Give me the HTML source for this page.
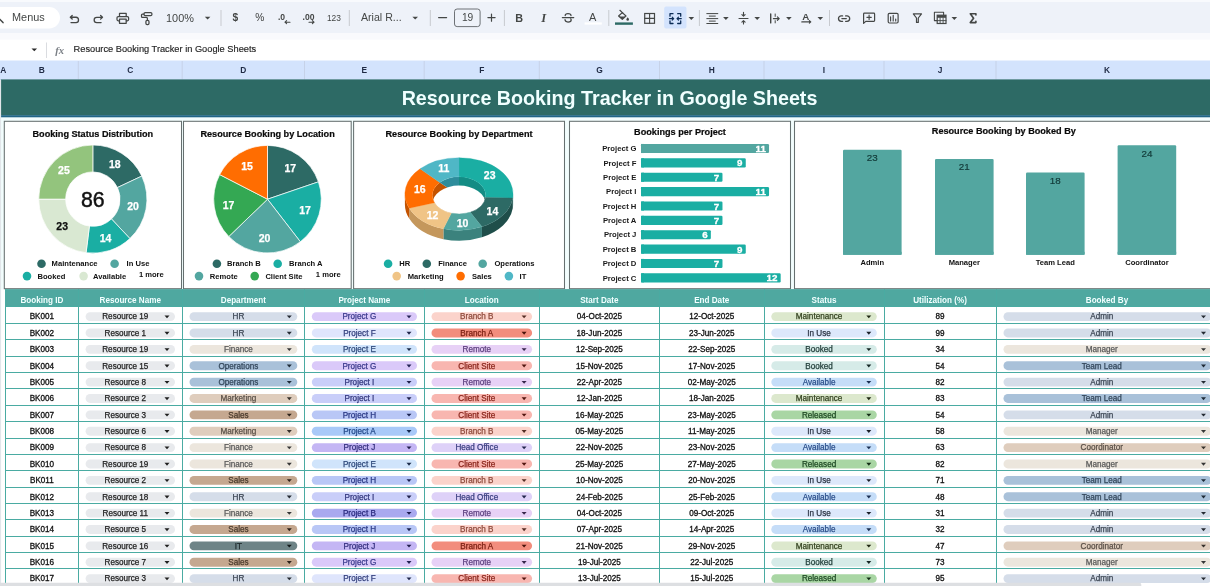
<!DOCTYPE html>
<html><head><meta charset="utf-8"><title>Resource Booking Tracker in Google Sheets</title>
<style>
html,body{margin:0;padding:0;background:#fff;}
body{width:1210px;height:586px;overflow:hidden;position:relative;font-family:"Liberation Sans",sans-serif;}
svg{position:absolute;left:0;top:0;display:block;will-change:transform;}
text{font-family:"Liberation Sans",sans-serif;white-space:pre;}
text.sf{font-family:"Liberation Serif",serif;}
</style></head><body>
<svg width="1210" height="586" viewBox="0 0 1210 586">
<rect x="0.00" y="0.00" width="1210.00" height="33.00" fill="#eef2f9"/>
<rect x="0.00" y="0.00" width="1210.00" height="2.00" fill="#f8fafd"/>
<rect x="-20.00" y="7.00" width="80.00" height="21.50" fill="#fff" rx="10.75"/>
<text x="12.00" y="20.70" font-size="10.9" fill="#444746">Menus</text>
<rect x="0.00" y="33.00" width="1210.00" height="27.50" fill="#fff"/>
<rect x="0.00" y="33.00" width="1210.00" height="6.60" fill="#f9fafd"/>
<path d="M-0.5,19 L3,22.6" fill="none" stroke="#444746" stroke-width="1.5" stroke-linecap="round" stroke-linejoin="round" />
<path d="M72.2,15.45 L70.3,17.25 L72.2,19.05 M70.5,17.25 H76 A2.68,2.68 0 0 1 76,22.6 H71" fill="none" stroke="#444746" stroke-width="1.3" stroke-linecap="round" stroke-linejoin="round" />
<path d="M100.6,15.5 L102.5,17.3 L100.6,19.1 M102.3,17.3 H96.8 A2.65,2.65 0 0 0 96.8,22.6 H101.1" fill="none" stroke="#444746" stroke-width="1.3" stroke-linecap="round" stroke-linejoin="round" />
<path d="M119.5,16.3 V13.4 H126.2 V16.3" fill="none" stroke="#444746" stroke-width="1.25" stroke-linecap="round" stroke-linejoin="round" />
<path d="M119.4,20.8 H118.2 Q117,20.8 117,19.6 V17.7 Q117,16.5 118.2,16.5 H127.4 Q128.6,16.5 128.6,17.7 V19.6 Q128.6,20.8 127.4,20.8 H126.3" fill="none" stroke="#444746" stroke-width="1.25" stroke-linecap="round" stroke-linejoin="round" />
<path d="M119.5,19.2 H126.2 V23.3 H119.5 Z" fill="none" stroke="#444746" stroke-width="1.25" stroke-linecap="round" stroke-linejoin="round" />
<rect x="144" y="12.5" width="7.9" height="3.1" rx="1.2" fill="none" stroke="#444746" stroke-width="1.25"/>
<path d="M144,14 H142.4 Q141.5,14 141.5,14.9 V16.5 Q141.5,17.4 142.4,17.4 H146.4 Q147.4,17.4 147.4,18.4 V20.4" fill="none" stroke="#444746" stroke-width="1.25" stroke-linecap="round" stroke-linejoin="round" />
<rect x="145.9" y="20.4" width="3.1" height="4.1" rx="1.3" fill="none" stroke="#444746" stroke-width="1.25"/>
<text x="180" y="21.9" font-size="10.9" font-weight="normal" text-anchor="middle" fill="#444746" >100%</text>
<path d="M204.79999999999998,16.8 L210.4,16.8 L207.6,19.6 Z" fill="#444746"/>
<rect x="220.5" y="10" width="1" height="16" fill="#c7cacf"/>
<text x="235.4" y="20.6" font-size="10.2" font-weight="bold" text-anchor="middle" fill="#444746" >$</text>
<text x="259.9" y="20.6" font-size="10.2" font-weight="normal" text-anchor="middle" fill="#3a3c3b" >%</text>
<text x="281.5" y="19.5" font-size="8.6" font-weight="bold" text-anchor="middle" fill="#444746" >.0</text>
<path d="M290,22.2 H285 M286.6,20.7 L285,22.2 L286.6,23.7" fill="none" stroke="#444746" stroke-width="1.1" stroke-linecap="round" stroke-linejoin="round" />
<text x="308.5" y="19.5" font-size="8.6" font-weight="bold" text-anchor="middle" fill="#444746" >.00</text>
<path d="M309,22.2 H314 M312.4,20.7 L314,22.2 L312.4,23.7" fill="none" stroke="#444746" stroke-width="1.1" stroke-linecap="round" stroke-linejoin="round" />
<text x="333.9" y="20.5" font-size="8.4" font-weight="normal" text-anchor="middle" fill="#444746" >123</text>
<rect x="348.8" y="10" width="1" height="16" fill="#c7cacf"/>
<text x="361" y="21.2" font-size="10.6" font-weight="normal" text-anchor="start" fill="#444746" >Arial R...</text>
<path d="M412.4,16.8 L418.0,16.8 L415.2,19.6 Z" fill="#444746"/>
<rect x="429.8" y="10" width="1" height="16" fill="#c7cacf"/>
<path d="M438.6,17.6 H446.6" fill="none" stroke="#444746" stroke-width="1.2" stroke-linecap="round" stroke-linejoin="round" />
<rect x="454.5" y="9" width="25.6" height="17.6" rx="2.6" fill="none" stroke="#5f6368" stroke-width="0.9"/>
<text x="467.6" y="21" font-size="10.2" font-weight="normal" text-anchor="middle" fill="#444746" >19</text>
<path d="M487.9,17.6 H495.1 M491.5,14 V21.2" fill="none" stroke="#444746" stroke-width="1.2" stroke-linecap="round" stroke-linejoin="round" />
<rect x="503.9" y="10" width="1" height="16" fill="#c7cacf"/>
<text x="519.2" y="21.9" font-size="10.8" font-weight="bold" text-anchor="middle" fill="#444746" >B</text>
<text x="543.6" y="22.2" font-size="12.6" font-style="italic" font-weight="bold" text-anchor="middle" fill="#444746" class="sf">I</text>
<path d="M562.3,17.6 H573.8" fill="none" stroke="#444746" stroke-width="1.1" stroke-linecap="round" stroke-linejoin="round" />
<path d="M571,15.6 Q571,13.6 568,13.6 Q565.2,13.6 565.2,15.6" fill="none" stroke="#444746" stroke-width="1.25" stroke-linecap="round" stroke-linejoin="round" />
<path d="M565,19.6 Q565,22 568,22 Q571.2,22 571.2,19.9 Q571.2,19.2 570.6,18.8" fill="none" stroke="#444746" stroke-width="1.25" stroke-linecap="round" stroke-linejoin="round" />
<text x="592.6" y="20.7" font-size="11" font-weight="normal" text-anchor="middle" fill="#444746" >A</text>
<rect x="584.6" y="22.4" width="17.2" height="2.2" fill="#ffffff"/>
<rect x="608.3" y="10" width="1" height="16" fill="#c7cacf"/>
<path d="M619.9,10.3 L622.9,13.1" fill="none" stroke="#444746" stroke-width="1.2" stroke-linecap="round" stroke-linejoin="round" />
<path d="M622.3,12.6 L626,16 L622.3,19.4 L618.6,16 Z" fill="none" stroke="#444746" stroke-width="1.2" stroke-linecap="round" stroke-linejoin="round" />
<path d="M619.2,16.4 H625.4 L622.3,19.3 Z" fill="#444746"/>
<path d="M627.7,17.2 Q629,18.8 629,19.4 A1.3,1.3 0 0 1 626.4,19.4 Q626.4,18.8 627.7,17.2 Z" fill="#444746"/>
<rect x="615" y="22.4" width="17.9" height="2.4" fill="#2d6a65"/>
<rect x="644.7" y="13.5" width="9.8" height="9.8" fill="none" stroke="#444746" stroke-width="1.2"/>
<path d="M649.6,13.5 V23.3 M644.7,18.4 H654.5" fill="none" stroke="#444746" stroke-width="1.1" stroke-linecap="round" stroke-linejoin="round" />
<rect x="664.2" y="6.4" width="22.3" height="22.2" rx="2" fill="#d3e3fd"/>
<path d="M673,13.7 H670 V16.2 M677.7,13.7 H680.7 V16.2 M670,21 V23.5 H673 M680.7,21 V23.5 H677.7" fill="none" stroke="#0b2b55" stroke-width="1.3" stroke-linecap="round" stroke-linejoin="round" />
<path d="M669.4,18.6 H673.6 M672.2,17.1 L673.7,18.6 L672.2,20.1 M681.3,18.6 H677.1 M678.5,17.1 L677,18.6 L678.5,20.1" fill="none" stroke="#0b2b55" stroke-width="1.15" stroke-linecap="round" stroke-linejoin="round" />
<path d="M688.5,17.099999999999998 L694.0999999999999,17.099999999999998 L691.3,19.9 Z" fill="#444746"/>
<rect x="698.9" y="10" width="1" height="16" fill="#c7cacf"/>
<path d="M706.8,13.6 H717.8 M709.3,16.1 H715.3 M706.8,18.6 H717.8 M709.3,21.1 H715.3 M706.8,23.5 H717.8" fill="none" stroke="#444746" stroke-width="1.0" stroke-linecap="round" stroke-linejoin="round" />
<path d="M723.1,17.099999999999998 L728.6999999999999,17.099999999999998 L725.9,19.9 Z" fill="#444746"/>
<path d="M739,18.5 H748" fill="none" stroke="#444746" stroke-width="1.1" stroke-linecap="round" stroke-linejoin="round" />
<path d="M743.5,12.3 V16 M741.9,14.6 L743.5,16.2 L745.1,14.6" fill="none" stroke="#444746" stroke-width="1.1" stroke-linecap="round" stroke-linejoin="round" />
<path d="M743.5,24 V20.8 M741.9,22.2 L743.5,20.6 L745.1,22.2" fill="none" stroke="#444746" stroke-width="1.1" stroke-linecap="round" stroke-linejoin="round" />
<path d="M754.4000000000001,17.099999999999998 L760.0,17.099999999999998 L757.2,19.9 Z" fill="#444746"/>
<path d="M770.7,14 V22.9" fill="none" stroke="#444746" stroke-width="1.4" stroke-linecap="round" stroke-linejoin="round" />
<path d="M775.2,14 V16.4 M775.2,20.7 V22.9" fill="none" stroke="#444746" stroke-width="1.0" stroke-linecap="round" stroke-linejoin="round" />
<path d="M773.4,18.6 H779 M777.4,16.8 L779.2,18.6 L777.4,20.4" fill="none" stroke="#444746" stroke-width="1.15" stroke-linecap="round" stroke-linejoin="round" />
<path d="M786.1,17.099999999999998 L791.6999999999999,17.099999999999998 L788.9,19.9 Z" fill="#444746"/>
<text x="805.9" y="20.1" font-size="9.8" font-weight="bold" text-anchor="middle" fill="#444746" >A</text>
<path d="M801.8,21.9 H810.6 M809.4,20.7 L810.8,21.9 L809.4,23.1" fill="none" stroke="#444746" stroke-width="1.15" stroke-linecap="round" stroke-linejoin="round" />
<path d="M817.5,17.099999999999998 L823.0999999999999,17.099999999999998 L820.3,19.9 Z" fill="#444746"/>
<rect x="829.0" y="10" width="1" height="16" fill="#c7cacf"/>
<path d="M842.6,15.9 H841.2 A2.7,2.7 0 0 0 841.2,21.3 H842.6 M845.6,15.9 H847 A2.7,2.7 0 0 1 847,21.3 H845.6 M841.9,18.6 H846.3" fill="none" stroke="#444746" stroke-width="1.3" stroke-linecap="round" stroke-linejoin="round" />
<path d="M863.6,23.4 V14 Q863.6,13.2 864.4,13.2 H873.8 Q874.6,13.2 874.6,14 V20.6 Q874.6,21.4 873.8,21.4 H865.8 Z" fill="none" stroke="#444746" stroke-width="1.2" stroke-linecap="round" stroke-linejoin="round" />
<path d="M866.9,17.3 H871.3 M869.1,15.1 V19.5" fill="none" stroke="#444746" stroke-width="1.15" stroke-linecap="round" stroke-linejoin="round" />
<rect x="888.2" y="13.4" width="9.9" height="9.6" rx="1.2" fill="none" stroke="#444746" stroke-width="1.2"/>
<path d="M890.6,16.9 V20.9 M893.2,15.3 V20.9 M895.7,19 V20.9" fill="none" stroke="#444746" stroke-width="1.15" stroke-linecap="round" stroke-linejoin="round" />
<path d="M913.3,13.9 H921.5 L918.3,18 V22.4 L916.5,22.4 V18 Z" fill="none" stroke="#444746" stroke-width="1.2" stroke-linecap="round" stroke-linejoin="round" />
<path d="M936.6,20.6 H934.4 V12.3 H943.6 V14.4" fill="none" stroke="#444746" stroke-width="1.1" stroke-linecap="round" stroke-linejoin="round" />
<rect x="937.2" y="15.2" width="8.8" height="8.3" fill="none" stroke="#444746" stroke-width="1.2"/>
<rect x="937.2" y="15.2" width="8.8" height="2.6" fill="#444746"/>
<path d="M937.2,20.6 H946 M940.1,17.8 V23.5 M943.1,17.8 V23.5" fill="none" stroke="#444746" stroke-width="0.9" stroke-linecap="round" stroke-linejoin="round" />
<path d="M951.5,17.099999999999998 L957.0999999999999,17.099999999999998 L954.3,19.9 Z" fill="#444746"/>
<path d="M975.9,15 V13.7 H970.3 L973.6,18.2 L970.3,22.6 H975.9 V21.3" fill="none" stroke="#444746" stroke-width="1.65" stroke-linecap="round" stroke-linejoin="round" />
<path d="M31.499999999999996,48.5 L37.099999999999994,48.5 L34.3,51.3 Z" fill="#2a2a2a"/>
<text x="55.3" y="53.7" font-size="10.6" font-style="italic" font-weight="bold" fill="#7a7f85" class="sf">fx</text>
<rect x="46.00" y="42.50" width="1.00" height="15.50" fill="#dadce0"/>
<text x="73.60" y="52.30" font-size="9.25" fill="#1f1f1f" stroke="#1f1f1f" stroke-width="0.15">Resource Booking Tracker in Google Sheets</text>
<rect x="0.00" y="60.50" width="1210.00" height="19.50" fill="#d3e3fd"/>
<text x="3.20" y="72.89" font-size="8.4" font-weight="bold" text-anchor="middle" fill="#1f2a44">A</text>
<text x="41.90" y="72.89" font-size="8.4" font-weight="bold" text-anchor="middle" fill="#1f2a44">B</text>
<text x="130.25" y="72.89" font-size="8.4" font-weight="bold" text-anchor="middle" fill="#1f2a44">C</text>
<rect x="77.80" y="61.00" width="1.00" height="18.40" fill="#c6d2e8"/>
<text x="243.35" y="72.89" font-size="8.4" font-weight="bold" text-anchor="middle" fill="#1f2a44">D</text>
<rect x="181.70" y="61.00" width="1.00" height="18.40" fill="#c6d2e8"/>
<text x="364.35" y="72.89" font-size="8.4" font-weight="bold" text-anchor="middle" fill="#1f2a44">E</text>
<rect x="304.00" y="61.00" width="1.00" height="18.40" fill="#c6d2e8"/>
<text x="481.75" y="72.89" font-size="8.4" font-weight="bold" text-anchor="middle" fill="#1f2a44">F</text>
<rect x="423.70" y="61.00" width="1.00" height="18.40" fill="#c6d2e8"/>
<text x="599.40" y="72.89" font-size="8.4" font-weight="bold" text-anchor="middle" fill="#1f2a44">G</text>
<rect x="538.80" y="61.00" width="1.00" height="18.40" fill="#c6d2e8"/>
<text x="711.75" y="72.89" font-size="8.4" font-weight="bold" text-anchor="middle" fill="#1f2a44">H</text>
<rect x="659.00" y="61.00" width="1.00" height="18.40" fill="#c6d2e8"/>
<text x="824.00" y="72.89" font-size="8.4" font-weight="bold" text-anchor="middle" fill="#1f2a44">I</text>
<rect x="763.50" y="61.00" width="1.00" height="18.40" fill="#c6d2e8"/>
<text x="940.00" y="72.89" font-size="8.4" font-weight="bold" text-anchor="middle" fill="#1f2a44">J</text>
<rect x="883.50" y="61.00" width="1.00" height="18.40" fill="#c6d2e8"/>
<text x="1107.00" y="72.89" font-size="8.4" font-weight="bold" text-anchor="middle" fill="#1f2a44">K</text>
<rect x="995.50" y="61.00" width="1.00" height="18.40" fill="#c6d2e8"/>
<rect x="0.80" y="79.40" width="1210.00" height="36.00" fill="#2d6a65"/>
<rect x="0.80" y="115.20" width="1210.00" height="2.40" fill="#1f6587"/>
<text x="609.50" y="104.68" font-size="19.7" font-weight="bold" text-anchor="middle" fill="#f0ffff">Resource Booking Tracker in Google Sheets</text>
<rect x="0.00" y="117.50" width="1210.00" height="172.00" fill="#f2fdfd"/>
<rect x="4.30" y="121.3" width="177.20" height="167.4" fill="#fff" stroke="#667070" stroke-width="1.05"/>
<rect x="183.50" y="121.3" width="167.70" height="167.4" fill="#fff" stroke="#667070" stroke-width="1.05"/>
<rect x="353.60" y="121.3" width="210.90" height="167.4" fill="#fff" stroke="#667070" stroke-width="1.05"/>
<rect x="569.50" y="121.3" width="221.00" height="167.4" fill="#fff" stroke="#667070" stroke-width="1.05"/>
<rect x="794.50" y="121.3" width="420.50" height="167.4" fill="#fff" stroke="#667070" stroke-width="1.05"/>
<path d="M92.85,145.00 A54.1,54.1 0 0 1 141.80,176.07 L117.46,187.52 A27.2,27.2 0 0 0 92.85,171.90 Z" fill="#2d6a65" stroke="#fff" stroke-width="0.7" stroke-linejoin="round"/>
<path d="M141.80,176.07 A54.1,54.1 0 0 1 129.88,238.54 L111.47,218.93 A27.2,27.2 0 0 0 117.46,187.52 Z" fill="#53a6a0" stroke="#fff" stroke-width="0.7" stroke-linejoin="round"/>
<path d="M129.88,238.54 A54.1,54.1 0 0 1 86.07,252.77 L89.44,226.09 A27.2,27.2 0 0 0 111.47,218.93 Z" fill="#1aaea3" stroke="#fff" stroke-width="0.7" stroke-linejoin="round"/>
<path d="M86.07,252.77 A54.1,54.1 0 0 1 38.75,199.10 L65.65,199.10 A27.2,27.2 0 0 0 89.44,226.09 Z" fill="#d9e8d2" stroke="#fff" stroke-width="0.7" stroke-linejoin="round"/>
<path d="M38.75,199.10 A54.1,54.1 0 0 1 92.85,145.00 L92.85,171.90 A27.2,27.2 0 0 0 65.65,199.10 Z" fill="#93c47d" stroke="#fff" stroke-width="0.7" stroke-linejoin="round"/>
<text x="114.77" y="168.18" font-size="10.5" font-weight="bold" text-anchor="middle" fill="#fff" stroke="#fff" stroke-width="0.25">18</text>
<text x="133.03" y="210.38" font-size="10.5" font-weight="bold" text-anchor="middle" fill="#fff" stroke="#fff" stroke-width="0.25">20</text>
<text x="105.49" y="241.61" font-size="10.5" font-weight="bold" text-anchor="middle" fill="#fff" stroke="#fff" stroke-width="0.25">14</text>
<text x="62.17" y="229.76" font-size="10.5" font-weight="bold" text-anchor="middle" fill="#111" stroke="#111" stroke-width="0.25">23</text>
<text x="63.93" y="173.79" font-size="10.5" font-weight="bold" text-anchor="middle" fill="#fff" stroke="#fff" stroke-width="0.25">25</text>
<text x="92.85" y="206.73" font-size="21.3" text-anchor="middle" fill="#111" stroke="#111" stroke-width="0.45">86</text>
<path d="M267.5,199.2 L267.50,145.40 A53.8,53.8 0 0 1 318.42,181.83 Z" fill="#2d6a65" stroke="#fff" stroke-width="0.7" stroke-linejoin="round"/>
<path d="M267.5,199.2 L318.42,181.83 A53.8,53.8 0 0 1 300.38,241.78 Z" fill="#1aaea3" stroke="#fff" stroke-width="0.7" stroke-linejoin="round"/>
<path d="M267.5,199.2 L300.38,241.78 A53.8,53.8 0 0 1 228.77,236.54 Z" fill="#53a6a0" stroke="#fff" stroke-width="0.7" stroke-linejoin="round"/>
<path d="M267.5,199.2 L228.77,236.54 A53.8,53.8 0 0 1 219.65,174.60 Z" fill="#34a853" stroke="#fff" stroke-width="0.7" stroke-linejoin="round"/>
<path d="M267.5,199.2 L219.65,174.60 A53.8,53.8 0 0 1 267.50,145.40 Z" fill="#ff6d01" stroke="#fff" stroke-width="0.7" stroke-linejoin="round"/>
<text x="290.35" y="171.51" font-size="10.5" font-weight="bold" text-anchor="middle" fill="#fff" stroke="#fff" stroke-width="0.25">17</text>
<text x="305.11" y="214.17" font-size="10.5" font-weight="bold" text-anchor="middle" fill="#fff" stroke="#fff" stroke-width="0.25">17</text>
<text x="264.63" y="241.64" font-size="10.5" font-weight="bold" text-anchor="middle" fill="#fff" stroke="#fff" stroke-width="0.25">20</text>
<text x="228.64" y="208.65" font-size="10.5" font-weight="bold" text-anchor="middle" fill="#fff" stroke="#fff" stroke-width="0.25">17</text>
<text x="247.04" y="169.95" font-size="10.5" font-weight="bold" text-anchor="middle" fill="#fff" stroke="#fff" stroke-width="0.25">15</text>
<path d="M513.10,194.00 A54.1,36.3 0 0 1 512.78,197.97 L512.78,208.37 A54.1,36.3 0 0 0 513.10,204.40 Z" fill="#148c84"/>
<path d="M512.78,197.97 A54.1,36.3 0 0 1 481.96,226.87 L481.96,237.27 A54.1,36.3 0 0 0 512.78,208.37 Z" fill="#1f4e4a"/>
<path d="M481.96,226.87 A54.1,36.3 0 0 1 443.41,228.76 L443.41,239.16 A54.1,36.3 0 0 0 481.96,237.27 Z" fill="#3b827d"/>
<path d="M443.41,228.76 A54.1,36.3 0 0 1 409.21,208.20 L409.21,218.60 A54.1,36.3 0 0 0 443.41,239.16 Z" fill="#c4975c"/>
<path d="M409.21,208.20 A54.1,36.3 0 0 1 404.90,194.00 L404.90,204.40 A54.1,36.3 0 0 0 409.21,218.60 Z" fill="#c45300"/>
<clipPath id="inh"><ellipse cx="459.0" cy="195.4" rx="26.7" ry="18.6"/></clipPath><g clip-path="url(#inh)">
<path d="M459.0,195.4 L459.00,139.60 A80.1,55.800000000000004 0 0 1 538.62,201.50 Z" fill="#148c84"/>
<path d="M459.0,195.4 L538.62,201.50 A80.1,55.800000000000004 0 0 1 493.00,245.92 Z" fill="#1f4e4a"/>
<path d="M459.0,195.4 L493.00,245.92 A80.1,55.800000000000004 0 0 1 435.92,248.83 Z" fill="#3b827d"/>
<path d="M459.0,195.4 L435.92,248.83 A80.1,55.800000000000004 0 0 1 385.28,217.22 Z" fill="#c4975c"/>
<path d="M459.0,195.4 L385.28,217.22 A80.1,55.800000000000004 0 0 1 401.34,156.67 Z" fill="#c45300"/>
<path d="M459.0,195.4 L401.34,156.67 A80.1,55.800000000000004 0 0 1 459.00,139.60 Z" fill="#2e8c9b"/>
<ellipse cx="459.0" cy="204.20000000000002" rx="26.7" ry="18.6" fill="#fff"/></g>
<path d="M459.00,157.70 A54.1,36.3 0 0 1 512.78,197.97 L485.54,197.43 A26.7,18.6 0 0 0 459.00,176.80 Z" fill="#1aaea3" stroke="#1aaea3" stroke-width="0.3"/>
<path d="M512.78,197.97 A54.1,36.3 0 0 1 481.96,226.87 L470.33,212.24 A26.7,18.6 0 0 0 485.54,197.43 Z" fill="#2d6a65" stroke="#2d6a65" stroke-width="0.3"/>
<path d="M481.96,226.87 A54.1,36.3 0 0 1 443.41,228.76 L451.31,213.21 A26.7,18.6 0 0 0 470.33,212.24 Z" fill="#53a6a0" stroke="#53a6a0" stroke-width="0.3"/>
<path d="M443.41,228.76 A54.1,36.3 0 0 1 409.21,208.20 L434.43,202.67 A26.7,18.6 0 0 0 451.31,213.21 Z" fill="#f0c486" stroke="#f0c486" stroke-width="0.3"/>
<path d="M409.21,208.20 A54.1,36.3 0 0 1 420.05,168.81 L439.78,182.49 A26.7,18.6 0 0 0 434.43,202.67 Z" fill="#ff6d01" stroke="#ff6d01" stroke-width="0.3"/>
<path d="M420.05,168.81 A54.1,36.3 0 0 1 459.00,157.70 L459.00,176.80 A26.7,18.6 0 0 0 439.78,182.49 Z" fill="#4fb7c6" stroke="#4fb7c6" stroke-width="0.3"/>
<text x="489.69" y="179.06" font-size="10.5" font-weight="bold" text-anchor="middle" fill="#fff" stroke="#fff" stroke-width="0.25">23</text>
<text x="492.46" y="214.72" font-size="10.5" font-weight="bold" text-anchor="middle" fill="#fff" stroke="#fff" stroke-width="0.25">14</text>
<text x="462.55" y="226.59" font-size="10.5" font-weight="bold" text-anchor="middle" fill="#fff" stroke="#fff" stroke-width="0.25">10</text>
<text x="432.64" y="219.38" font-size="10.5" font-weight="bold" text-anchor="middle" fill="#fff" stroke="#fff" stroke-width="0.25">12</text>
<text x="419.87" y="192.93" font-size="10.5" font-weight="bold" text-anchor="middle" fill="#fff" stroke="#fff" stroke-width="0.25">16</text>
<text x="443.80" y="171.84" font-size="10.5" font-weight="bold" text-anchor="middle" fill="#fff" stroke="#fff" stroke-width="0.25">11</text>
<circle cx="41.5" cy="263.8" r="4.3" fill="#2d6a65"/>
<text x="51.60" y="266.31" font-size="7.6" font-weight="bold" fill="#111">Maintenance</text>
<circle cx="114.6" cy="263.8" r="4.3" fill="#53a6a0"/>
<text x="126.60" y="266.31" font-size="7.6" font-weight="bold" fill="#111">In Use</text>
<circle cx="27" cy="276.1" r="4.3" fill="#1aaea3"/>
<text x="37.50" y="278.61" font-size="7.6" font-weight="bold" fill="#111">Booked</text>
<circle cx="83.6" cy="276.1" r="4.3" fill="#d9e8d2"/>
<text x="93.10" y="278.61" font-size="7.6" font-weight="bold" fill="#111">Available</text>
<text x="138.90" y="277.21" font-size="7.6" font-weight="bold" fill="#111">1 more</text>
<circle cx="216.9" cy="263.8" r="4.3" fill="#2d6a65"/>
<text x="227.00" y="266.31" font-size="7.6" font-weight="bold" fill="#111">Branch B</text>
<circle cx="277.7" cy="263.8" r="4.3" fill="#1aaea3"/>
<text x="289.10" y="266.31" font-size="7.6" font-weight="bold" fill="#111">Branch A</text>
<circle cx="199" cy="276.1" r="4.3" fill="#53a6a0"/>
<text x="209.80" y="278.61" font-size="7.6" font-weight="bold" fill="#111">Remote</text>
<circle cx="254.7" cy="276.1" r="4.3" fill="#34a853"/>
<text x="265.40" y="278.61" font-size="7.6" font-weight="bold" fill="#111">Client Site</text>
<text x="315.80" y="277.21" font-size="7.6" font-weight="bold" fill="#111">1 more</text>
<circle cx="388.1" cy="263.8" r="4.3" fill="#1aaea3"/>
<text x="399.20" y="266.31" font-size="7.6" font-weight="bold" fill="#111">HR</text>
<circle cx="426.8" cy="263.8" r="4.3" fill="#2d6a65"/>
<text x="438.20" y="266.31" font-size="7.6" font-weight="bold" fill="#111">Finance</text>
<circle cx="482.7" cy="263.8" r="4.3" fill="#53a6a0"/>
<text x="494.40" y="266.31" font-size="7.6" font-weight="bold" fill="#111">Operations</text>
<circle cx="396.7" cy="276.1" r="4.3" fill="#f0c486"/>
<text x="407.80" y="278.61" font-size="7.6" font-weight="bold" fill="#111">Marketing</text>
<circle cx="460.6" cy="276.1" r="4.3" fill="#ff6d01"/>
<text x="472.00" y="278.61" font-size="7.6" font-weight="bold" fill="#111">Sales</text>
<circle cx="508.9" cy="276.1" r="4.3" fill="#4fb7c6"/>
<text x="519.60" y="278.61" font-size="7.6" font-weight="bold" fill="#111">IT</text>
<text x="92.80" y="136.85" font-size="9.15" font-weight="bold" text-anchor="middle" fill="#0a0a0a" stroke="#0a0a0a" stroke-width="0.2">Booking Status Distribution</text>
<text x="267.60" y="136.85" font-size="9.15" font-weight="bold" text-anchor="middle" fill="#0a0a0a" stroke="#0a0a0a" stroke-width="0.2">Resource Booking by Location</text>
<text x="459.00" y="136.85" font-size="9.15" font-weight="bold" text-anchor="middle" fill="#0a0a0a" stroke="#0a0a0a" stroke-width="0.2">Resource Booking by Department</text>
<text x="680.00" y="135.35" font-size="9.15" font-weight="bold" text-anchor="middle" fill="#0a0a0a" stroke="#0a0a0a" stroke-width="0.2">Bookings per Project</text>
<text x="1003.80" y="134.35" font-size="9.15" font-weight="bold" text-anchor="middle" fill="#0a0a0a" stroke="#0a0a0a" stroke-width="0.2">Resource Booking by Booked By</text>
<rect x="641.00" y="143.95" width="128.04" height="9.10" fill="#53a6a0" rx="1.2"/>
<rect x="641.00" y="143.95" width="3.00" height="9.10" fill="#53a6a0"/>
<text x="636.40" y="151.25" font-size="7.7" font-weight="bold" text-anchor="end" fill="#1a1a1a">Project G</text>
<text x="765.84" y="152.07" font-size="9.8" font-weight="bold" text-anchor="end" fill="#fff" stroke="#fff" stroke-width="0.3">11</text>
<rect x="641.00" y="158.32" width="104.76" height="9.10" fill="#1aaea3" rx="1.2"/>
<rect x="641.00" y="158.32" width="3.00" height="9.10" fill="#1aaea3"/>
<text x="636.40" y="165.62" font-size="7.7" font-weight="bold" text-anchor="end" fill="#1a1a1a">Project F</text>
<text x="742.56" y="166.44" font-size="9.8" font-weight="bold" text-anchor="end" fill="#fff" stroke="#fff" stroke-width="0.3">9</text>
<rect x="641.00" y="172.69" width="81.48" height="9.10" fill="#1aaea3" rx="1.2"/>
<rect x="641.00" y="172.69" width="3.00" height="9.10" fill="#1aaea3"/>
<text x="636.40" y="179.99" font-size="7.7" font-weight="bold" text-anchor="end" fill="#1a1a1a">Project E</text>
<text x="719.28" y="180.81" font-size="9.8" font-weight="bold" text-anchor="end" fill="#fff" stroke="#fff" stroke-width="0.3">7</text>
<rect x="641.00" y="187.06" width="128.04" height="9.10" fill="#1aaea3" rx="1.2"/>
<rect x="641.00" y="187.06" width="3.00" height="9.10" fill="#1aaea3"/>
<text x="636.40" y="194.36" font-size="7.7" font-weight="bold" text-anchor="end" fill="#1a1a1a">Project I</text>
<text x="765.84" y="195.18" font-size="9.8" font-weight="bold" text-anchor="end" fill="#fff" stroke="#fff" stroke-width="0.3">11</text>
<rect x="641.00" y="201.43" width="81.48" height="9.10" fill="#1aaea3" rx="1.2"/>
<rect x="641.00" y="201.43" width="3.00" height="9.10" fill="#1aaea3"/>
<text x="636.40" y="208.73" font-size="7.7" font-weight="bold" text-anchor="end" fill="#1a1a1a">Project H</text>
<text x="719.28" y="209.55" font-size="9.8" font-weight="bold" text-anchor="end" fill="#fff" stroke="#fff" stroke-width="0.3">7</text>
<rect x="641.00" y="215.80" width="81.48" height="9.10" fill="#1aaea3" rx="1.2"/>
<rect x="641.00" y="215.80" width="3.00" height="9.10" fill="#1aaea3"/>
<text x="636.40" y="223.10" font-size="7.7" font-weight="bold" text-anchor="end" fill="#1a1a1a">Project A</text>
<text x="719.28" y="223.92" font-size="9.8" font-weight="bold" text-anchor="end" fill="#fff" stroke="#fff" stroke-width="0.3">7</text>
<rect x="641.00" y="230.17" width="69.84" height="9.10" fill="#1aaea3" rx="1.2"/>
<rect x="641.00" y="230.17" width="3.00" height="9.10" fill="#1aaea3"/>
<text x="636.40" y="237.47" font-size="7.7" font-weight="bold" text-anchor="end" fill="#1a1a1a">Project J</text>
<text x="707.64" y="238.29" font-size="9.8" font-weight="bold" text-anchor="end" fill="#fff" stroke="#fff" stroke-width="0.3">6</text>
<rect x="641.00" y="244.54" width="104.76" height="9.10" fill="#1aaea3" rx="1.2"/>
<rect x="641.00" y="244.54" width="3.00" height="9.10" fill="#1aaea3"/>
<text x="636.40" y="251.84" font-size="7.7" font-weight="bold" text-anchor="end" fill="#1a1a1a">Project B</text>
<text x="742.56" y="252.66" font-size="9.8" font-weight="bold" text-anchor="end" fill="#fff" stroke="#fff" stroke-width="0.3">9</text>
<rect x="641.00" y="258.91" width="81.48" height="9.10" fill="#1aaea3" rx="1.2"/>
<rect x="641.00" y="258.91" width="3.00" height="9.10" fill="#1aaea3"/>
<text x="636.40" y="266.21" font-size="7.7" font-weight="bold" text-anchor="end" fill="#1a1a1a">Project D</text>
<text x="719.28" y="267.03" font-size="9.8" font-weight="bold" text-anchor="end" fill="#fff" stroke="#fff" stroke-width="0.3">7</text>
<rect x="641.00" y="273.28" width="139.68" height="9.10" fill="#1aaea3" rx="1.2"/>
<rect x="641.00" y="273.28" width="3.00" height="9.10" fill="#1aaea3"/>
<text x="636.40" y="280.58" font-size="7.7" font-weight="bold" text-anchor="end" fill="#1a1a1a">Project C</text>
<text x="777.48" y="281.40" font-size="9.8" font-weight="bold" text-anchor="end" fill="#fff" stroke="#fff" stroke-width="0.3">12</text>
<rect x="843.00" y="149.76" width="58.60" height="105.04" fill="#53a6a0" rx="1.2"/>
<rect x="843.00" y="251.80" width="58.60" height="3.00" fill="#53a6a0"/>
<text x="872.30" y="161.23" font-size="9.8" text-anchor="middle" fill="#123a38" stroke="#123a38" stroke-width="0.2">23</text>
<text x="872.30" y="264.81" font-size="7.6" font-weight="bold" text-anchor="middle" fill="#111">Admin</text>
<rect x="935.00" y="158.89" width="58.60" height="95.91" fill="#53a6a0" rx="1.2"/>
<rect x="935.00" y="251.80" width="58.60" height="3.00" fill="#53a6a0"/>
<text x="964.30" y="170.36" font-size="9.8" text-anchor="middle" fill="#123a38" stroke="#123a38" stroke-width="0.2">21</text>
<text x="964.30" y="264.81" font-size="7.6" font-weight="bold" text-anchor="middle" fill="#111">Manager</text>
<rect x="1026.00" y="172.59" width="58.60" height="82.21" fill="#53a6a0" rx="1.2"/>
<rect x="1026.00" y="251.80" width="58.60" height="3.00" fill="#53a6a0"/>
<text x="1055.30" y="184.07" font-size="9.8" text-anchor="middle" fill="#123a38" stroke="#123a38" stroke-width="0.2">18</text>
<text x="1055.30" y="264.81" font-size="7.6" font-weight="bold" text-anchor="middle" fill="#111">Team Lead</text>
<rect x="1117.60" y="145.19" width="58.60" height="109.61" fill="#53a6a0" rx="1.2"/>
<rect x="1117.60" y="251.80" width="58.60" height="3.00" fill="#53a6a0"/>
<text x="1146.90" y="156.66" font-size="9.8" text-anchor="middle" fill="#123a38" stroke="#123a38" stroke-width="0.2">24</text>
<text x="1146.90" y="264.81" font-size="7.6" font-weight="bold" text-anchor="middle" fill="#111">Coordinator</text>
<rect x="5.00" y="289.10" width="1210.00" height="17.90" fill="#4fa8a0"/>
<text x="41.90" y="303.20" font-size="8.15" font-weight="bold" text-anchor="middle" fill="#f2ffff">Booking ID</text>
<text x="130.25" y="303.20" font-size="8.15" font-weight="bold" text-anchor="middle" fill="#f2ffff">Resource Name</text>
<text x="243.35" y="303.20" font-size="8.15" font-weight="bold" text-anchor="middle" fill="#f2ffff">Department</text>
<text x="364.35" y="303.20" font-size="8.15" font-weight="bold" text-anchor="middle" fill="#f2ffff">Project Name</text>
<text x="481.75" y="303.20" font-size="8.15" font-weight="bold" text-anchor="middle" fill="#f2ffff">Location</text>
<text x="599.40" y="303.20" font-size="8.15" font-weight="bold" text-anchor="middle" fill="#f2ffff">Start Date</text>
<text x="711.75" y="303.20" font-size="8.15" font-weight="bold" text-anchor="middle" fill="#f2ffff">End Date</text>
<text x="824.00" y="303.20" font-size="8.15" font-weight="bold" text-anchor="middle" fill="#f2ffff">Status</text>
<text x="940.00" y="303.20" font-size="8.15" font-weight="bold" text-anchor="middle" fill="#f2ffff">Utilization (%)</text>
<text x="1107.00" y="303.20" font-size="8.15" font-weight="bold" text-anchor="middle" fill="#f2ffff">Booked By</text>
<text x="41.90" y="319.40" font-size="8.15" text-anchor="middle" fill="#111" stroke="#111" stroke-width="0.3">BK001</text>
<rect x="85.60" y="312.20" width="89.40" height="8.80" fill="#e8eaed" rx="4.4"/>
<text x="125.30" y="319.40" font-size="8.15" text-anchor="middle" fill="#1f1f1f" stroke="#1f1f1f" stroke-width="0.25">Resource 19</text>
<path d="M164.50,315.40 h5 l-2.5,2.9 Z" fill="#1f1f1f"/>
<rect x="189.50" y="312.20" width="107.80" height="8.80" fill="#d5dde9" rx="4.4"/>
<text x="238.40" y="319.40" font-size="8.15" text-anchor="middle" fill="#3c4654" stroke="#3c4654" stroke-width="0.25">HR</text>
<path d="M286.80,315.40 h5 l-2.5,2.9 Z" fill="#242a32"/>
<rect x="311.80" y="312.20" width="105.20" height="8.80" fill="#dac9f9" rx="4.4"/>
<text x="359.40" y="319.40" font-size="8.15" text-anchor="middle" fill="#3a3a8c" stroke="#3a3a8c" stroke-width="0.25">Project G</text>
<path d="M406.50,315.40 h5 l-2.5,2.9 Z" fill="#222254"/>
<rect x="431.50" y="312.20" width="100.60" height="8.80" fill="#fbd3cb" rx="4.4"/>
<text x="476.80" y="319.40" font-size="8.15" text-anchor="middle" fill="#8f4a3c" stroke="#8f4a3c" stroke-width="0.25">Branch B</text>
<path d="M521.60,315.40 h5 l-2.5,2.9 Z" fill="#552c24"/>
<text x="599.40" y="319.40" font-size="8.15" text-anchor="middle" fill="#111" stroke="#111" stroke-width="0.3">04-Oct-2025</text>
<text x="711.75" y="319.40" font-size="8.15" text-anchor="middle" fill="#111" stroke="#111" stroke-width="0.3">12-Oct-2025</text>
<rect x="771.30" y="312.20" width="105.50" height="8.80" fill="#dce8cd" rx="4.4"/>
<text x="819.05" y="319.40" font-size="8.15" text-anchor="middle" fill="#33421f" stroke="#33421f" stroke-width="0.25">Maintenance</text>
<path d="M866.30,315.40 h5 l-2.5,2.9 Z" fill="#1e2712"/>
<text x="940.00" y="319.40" font-size="8.15" text-anchor="middle" fill="#111" stroke="#111" stroke-width="0.3">89</text>
<rect x="1003.50" y="312.20" width="208.00" height="8.80" fill="#d5dde9" rx="4.4"/>
<text x="1101.80" y="319.40" font-size="8.15" text-anchor="middle" fill="#3c4654" stroke="#3c4654" stroke-width="0.25">Admin</text>
<path d="M1201.00,315.40 h5 l-2.5,2.9 Z" fill="#242a32"/>
<text x="41.90" y="335.77" font-size="8.15" text-anchor="middle" fill="#111" stroke="#111" stroke-width="0.3">BK002</text>
<rect x="85.60" y="328.58" width="89.40" height="8.80" fill="#e8eaed" rx="4.4"/>
<text x="125.30" y="335.77" font-size="8.15" text-anchor="middle" fill="#1f1f1f" stroke="#1f1f1f" stroke-width="0.25">Resource 1</text>
<path d="M164.50,331.78 h5 l-2.5,2.9 Z" fill="#1f1f1f"/>
<rect x="189.50" y="328.58" width="107.80" height="8.80" fill="#d5dde9" rx="4.4"/>
<text x="238.40" y="335.77" font-size="8.15" text-anchor="middle" fill="#3c4654" stroke="#3c4654" stroke-width="0.25">HR</text>
<path d="M286.80,331.78 h5 l-2.5,2.9 Z" fill="#242a32"/>
<rect x="311.80" y="328.58" width="105.20" height="8.80" fill="#dfe5fc" rx="4.4"/>
<text x="359.40" y="335.77" font-size="8.15" text-anchor="middle" fill="#34407e" stroke="#34407e" stroke-width="0.25">Project F</text>
<path d="M406.50,331.78 h5 l-2.5,2.9 Z" fill="#1f264b"/>
<rect x="431.50" y="328.58" width="100.60" height="8.80" fill="#f28d7d" rx="4.4"/>
<text x="476.80" y="335.77" font-size="8.15" text-anchor="middle" fill="#7a1f12" stroke="#7a1f12" stroke-width="0.25">Branch A</text>
<path d="M521.60,331.78 h5 l-2.5,2.9 Z" fill="#49120a"/>
<text x="599.40" y="335.77" font-size="8.15" text-anchor="middle" fill="#111" stroke="#111" stroke-width="0.3">18-Jun-2025</text>
<text x="711.75" y="335.77" font-size="8.15" text-anchor="middle" fill="#111" stroke="#111" stroke-width="0.3">23-Jun-2025</text>
<rect x="771.30" y="328.58" width="105.50" height="8.80" fill="#dde8fb" rx="4.4"/>
<text x="819.05" y="335.77" font-size="8.15" text-anchor="middle" fill="#2c3444" stroke="#2c3444" stroke-width="0.25">In Use</text>
<path d="M866.30,331.78 h5 l-2.5,2.9 Z" fill="#1a1f28"/>
<text x="940.00" y="335.77" font-size="8.15" text-anchor="middle" fill="#111" stroke="#111" stroke-width="0.3">99</text>
<rect x="1003.50" y="328.58" width="208.00" height="8.80" fill="#d5dde9" rx="4.4"/>
<text x="1101.80" y="335.77" font-size="8.15" text-anchor="middle" fill="#3c4654" stroke="#3c4654" stroke-width="0.25">Admin</text>
<path d="M1201.00,331.78 h5 l-2.5,2.9 Z" fill="#242a32"/>
<text x="41.90" y="352.15" font-size="8.15" text-anchor="middle" fill="#111" stroke="#111" stroke-width="0.3">BK003</text>
<rect x="85.60" y="344.95" width="89.40" height="8.80" fill="#e8eaed" rx="4.4"/>
<text x="125.30" y="352.15" font-size="8.15" text-anchor="middle" fill="#1f1f1f" stroke="#1f1f1f" stroke-width="0.25">Resource 19</text>
<path d="M164.50,348.15 h5 l-2.5,2.9 Z" fill="#1f1f1f"/>
<rect x="189.50" y="344.95" width="107.80" height="8.80" fill="#ece6dd" rx="4.4"/>
<text x="238.40" y="352.15" font-size="8.15" text-anchor="middle" fill="#5a5a5a" stroke="#5a5a5a" stroke-width="0.25">Finance</text>
<path d="M286.80,348.15 h5 l-2.5,2.9 Z" fill="#363636"/>
<rect x="311.80" y="344.95" width="105.20" height="8.80" fill="#d0e4fb" rx="4.4"/>
<text x="359.40" y="352.15" font-size="8.15" text-anchor="middle" fill="#2f4a7c" stroke="#2f4a7c" stroke-width="0.25">Project E</text>
<path d="M406.50,348.15 h5 l-2.5,2.9 Z" fill="#1c2c4a"/>
<rect x="431.50" y="344.95" width="100.60" height="8.80" fill="#e7d1f6" rx="4.4"/>
<text x="476.80" y="352.15" font-size="8.15" text-anchor="middle" fill="#5c3f7e" stroke="#5c3f7e" stroke-width="0.25">Remote</text>
<path d="M521.60,348.15 h5 l-2.5,2.9 Z" fill="#37254b"/>
<text x="599.40" y="352.15" font-size="8.15" text-anchor="middle" fill="#111" stroke="#111" stroke-width="0.3">12-Sep-2025</text>
<text x="711.75" y="352.15" font-size="8.15" text-anchor="middle" fill="#111" stroke="#111" stroke-width="0.3">22-Sep-2025</text>
<rect x="771.30" y="344.95" width="105.50" height="8.80" fill="#d6ebe8" rx="4.4"/>
<text x="819.05" y="352.15" font-size="8.15" text-anchor="middle" fill="#24403c" stroke="#24403c" stroke-width="0.25">Booked</text>
<path d="M866.30,348.15 h5 l-2.5,2.9 Z" fill="#152624"/>
<text x="940.00" y="352.15" font-size="8.15" text-anchor="middle" fill="#111" stroke="#111" stroke-width="0.3">34</text>
<rect x="1003.50" y="344.95" width="208.00" height="8.80" fill="#ece6dd" rx="4.4"/>
<text x="1101.80" y="352.15" font-size="8.15" text-anchor="middle" fill="#5a5a5a" stroke="#5a5a5a" stroke-width="0.25">Manager</text>
<path d="M1201.00,348.15 h5 l-2.5,2.9 Z" fill="#363636"/>
<text x="41.90" y="368.52" font-size="8.15" text-anchor="middle" fill="#111" stroke="#111" stroke-width="0.3">BK004</text>
<rect x="85.60" y="361.33" width="89.40" height="8.80" fill="#e8eaed" rx="4.4"/>
<text x="125.30" y="368.52" font-size="8.15" text-anchor="middle" fill="#1f1f1f" stroke="#1f1f1f" stroke-width="0.25">Resource 15</text>
<path d="M164.50,364.53 h5 l-2.5,2.9 Z" fill="#1f1f1f"/>
<rect x="189.50" y="361.33" width="107.80" height="8.80" fill="#a9c1d9" rx="4.4"/>
<text x="238.40" y="368.52" font-size="8.15" text-anchor="middle" fill="#33475b" stroke="#33475b" stroke-width="0.25">Operations</text>
<path d="M286.80,364.53 h5 l-2.5,2.9 Z" fill="#1e2a36"/>
<rect x="311.80" y="361.33" width="105.20" height="8.80" fill="#dac9f9" rx="4.4"/>
<text x="359.40" y="368.52" font-size="8.15" text-anchor="middle" fill="#3a3a8c" stroke="#3a3a8c" stroke-width="0.25">Project G</text>
<path d="M406.50,364.53 h5 l-2.5,2.9 Z" fill="#222254"/>
<rect x="431.50" y="361.33" width="100.60" height="8.80" fill="#f8b6b0" rx="4.4"/>
<text x="476.80" y="368.52" font-size="8.15" text-anchor="middle" fill="#8a261c" stroke="#8a261c" stroke-width="0.25">Client Site</text>
<path d="M521.60,364.53 h5 l-2.5,2.9 Z" fill="#521610"/>
<text x="599.40" y="368.52" font-size="8.15" text-anchor="middle" fill="#111" stroke="#111" stroke-width="0.3">15-Nov-2025</text>
<text x="711.75" y="368.52" font-size="8.15" text-anchor="middle" fill="#111" stroke="#111" stroke-width="0.3">17-Nov-2025</text>
<rect x="771.30" y="361.33" width="105.50" height="8.80" fill="#d6ebe8" rx="4.4"/>
<text x="819.05" y="368.52" font-size="8.15" text-anchor="middle" fill="#24403c" stroke="#24403c" stroke-width="0.25">Booked</text>
<path d="M866.30,364.53 h5 l-2.5,2.9 Z" fill="#152624"/>
<text x="940.00" y="368.52" font-size="8.15" text-anchor="middle" fill="#111" stroke="#111" stroke-width="0.3">54</text>
<rect x="1003.50" y="361.33" width="208.00" height="8.80" fill="#a9c1d9" rx="4.4"/>
<text x="1101.80" y="368.52" font-size="8.15" text-anchor="middle" fill="#33475b" stroke="#33475b" stroke-width="0.25">Team Lead</text>
<path d="M1201.00,364.53 h5 l-2.5,2.9 Z" fill="#1e2a36"/>
<text x="41.90" y="384.90" font-size="8.15" text-anchor="middle" fill="#111" stroke="#111" stroke-width="0.3">BK005</text>
<rect x="85.60" y="377.70" width="89.40" height="8.80" fill="#e8eaed" rx="4.4"/>
<text x="125.30" y="384.90" font-size="8.15" text-anchor="middle" fill="#1f1f1f" stroke="#1f1f1f" stroke-width="0.25">Resource 8</text>
<path d="M164.50,380.90 h5 l-2.5,2.9 Z" fill="#1f1f1f"/>
<rect x="189.50" y="377.70" width="107.80" height="8.80" fill="#a9c1d9" rx="4.4"/>
<text x="238.40" y="384.90" font-size="8.15" text-anchor="middle" fill="#33475b" stroke="#33475b" stroke-width="0.25">Operations</text>
<path d="M286.80,380.90 h5 l-2.5,2.9 Z" fill="#1e2a36"/>
<rect x="311.80" y="377.70" width="105.20" height="8.80" fill="#c9cef9" rx="4.4"/>
<text x="359.40" y="384.90" font-size="8.15" text-anchor="middle" fill="#34387e" stroke="#34387e" stroke-width="0.25">Project I</text>
<path d="M406.50,380.90 h5 l-2.5,2.9 Z" fill="#1f214b"/>
<rect x="431.50" y="377.70" width="100.60" height="8.80" fill="#e7d1f6" rx="4.4"/>
<text x="476.80" y="384.90" font-size="8.15" text-anchor="middle" fill="#5c3f7e" stroke="#5c3f7e" stroke-width="0.25">Remote</text>
<path d="M521.60,380.90 h5 l-2.5,2.9 Z" fill="#37254b"/>
<text x="599.40" y="384.90" font-size="8.15" text-anchor="middle" fill="#111" stroke="#111" stroke-width="0.3">22-Apr-2025</text>
<text x="711.75" y="384.90" font-size="8.15" text-anchor="middle" fill="#111" stroke="#111" stroke-width="0.3">02-May-2025</text>
<rect x="771.30" y="377.70" width="105.50" height="8.80" fill="#c5ddf8" rx="4.4"/>
<text x="819.05" y="384.90" font-size="8.15" text-anchor="middle" fill="#2c4f8a" stroke="#2c4f8a" stroke-width="0.25">Available</text>
<path d="M866.30,380.90 h5 l-2.5,2.9 Z" fill="#1a2f52"/>
<text x="940.00" y="384.90" font-size="8.15" text-anchor="middle" fill="#111" stroke="#111" stroke-width="0.3">82</text>
<rect x="1003.50" y="377.70" width="208.00" height="8.80" fill="#d5dde9" rx="4.4"/>
<text x="1101.80" y="384.90" font-size="8.15" text-anchor="middle" fill="#3c4654" stroke="#3c4654" stroke-width="0.25">Admin</text>
<path d="M1201.00,380.90 h5 l-2.5,2.9 Z" fill="#242a32"/>
<text x="41.90" y="401.27" font-size="8.15" text-anchor="middle" fill="#111" stroke="#111" stroke-width="0.3">BK006</text>
<rect x="85.60" y="394.08" width="89.40" height="8.80" fill="#e8eaed" rx="4.4"/>
<text x="125.30" y="401.27" font-size="8.15" text-anchor="middle" fill="#1f1f1f" stroke="#1f1f1f" stroke-width="0.25">Resource 2</text>
<path d="M164.50,397.28 h5 l-2.5,2.9 Z" fill="#1f1f1f"/>
<rect x="189.50" y="394.08" width="107.80" height="8.80" fill="#dfcdbd" rx="4.4"/>
<text x="238.40" y="401.27" font-size="8.15" text-anchor="middle" fill="#5b5148" stroke="#5b5148" stroke-width="0.25">Marketing</text>
<path d="M286.80,397.28 h5 l-2.5,2.9 Z" fill="#36302b"/>
<rect x="311.80" y="394.08" width="105.20" height="8.80" fill="#c9cef9" rx="4.4"/>
<text x="359.40" y="401.27" font-size="8.15" text-anchor="middle" fill="#34387e" stroke="#34387e" stroke-width="0.25">Project I</text>
<path d="M406.50,397.28 h5 l-2.5,2.9 Z" fill="#1f214b"/>
<rect x="431.50" y="394.08" width="100.60" height="8.80" fill="#f8b6b0" rx="4.4"/>
<text x="476.80" y="401.27" font-size="8.15" text-anchor="middle" fill="#8a261c" stroke="#8a261c" stroke-width="0.25">Client Site</text>
<path d="M521.60,397.28 h5 l-2.5,2.9 Z" fill="#521610"/>
<text x="599.40" y="401.27" font-size="8.15" text-anchor="middle" fill="#111" stroke="#111" stroke-width="0.3">12-Jan-2025</text>
<text x="711.75" y="401.27" font-size="8.15" text-anchor="middle" fill="#111" stroke="#111" stroke-width="0.3">18-Jan-2025</text>
<rect x="771.30" y="394.08" width="105.50" height="8.80" fill="#dce8cd" rx="4.4"/>
<text x="819.05" y="401.27" font-size="8.15" text-anchor="middle" fill="#33421f" stroke="#33421f" stroke-width="0.25">Maintenance</text>
<path d="M866.30,397.28 h5 l-2.5,2.9 Z" fill="#1e2712"/>
<text x="940.00" y="401.27" font-size="8.15" text-anchor="middle" fill="#111" stroke="#111" stroke-width="0.3">83</text>
<rect x="1003.50" y="394.08" width="208.00" height="8.80" fill="#a9c1d9" rx="4.4"/>
<text x="1101.80" y="401.27" font-size="8.15" text-anchor="middle" fill="#33475b" stroke="#33475b" stroke-width="0.25">Team Lead</text>
<path d="M1201.00,397.28 h5 l-2.5,2.9 Z" fill="#1e2a36"/>
<text x="41.90" y="417.65" font-size="8.15" text-anchor="middle" fill="#111" stroke="#111" stroke-width="0.3">BK007</text>
<rect x="85.60" y="410.45" width="89.40" height="8.80" fill="#e8eaed" rx="4.4"/>
<text x="125.30" y="417.65" font-size="8.15" text-anchor="middle" fill="#1f1f1f" stroke="#1f1f1f" stroke-width="0.25">Resource 3</text>
<path d="M164.50,413.65 h5 l-2.5,2.9 Z" fill="#1f1f1f"/>
<rect x="189.50" y="410.45" width="107.80" height="8.80" fill="#c5a890" rx="4.4"/>
<text x="238.40" y="417.65" font-size="8.15" text-anchor="middle" fill="#4a3a2c" stroke="#4a3a2c" stroke-width="0.25">Sales</text>
<path d="M286.80,413.65 h5 l-2.5,2.9 Z" fill="#2c221a"/>
<rect x="311.80" y="410.45" width="105.20" height="8.80" fill="#b9c7f6" rx="4.4"/>
<text x="359.40" y="417.65" font-size="8.15" text-anchor="middle" fill="#2c3a86" stroke="#2c3a86" stroke-width="0.25">Project H</text>
<path d="M406.50,413.65 h5 l-2.5,2.9 Z" fill="#1a2250"/>
<rect x="431.50" y="410.45" width="100.60" height="8.80" fill="#f8b6b0" rx="4.4"/>
<text x="476.80" y="417.65" font-size="8.15" text-anchor="middle" fill="#8a261c" stroke="#8a261c" stroke-width="0.25">Client Site</text>
<path d="M521.60,413.65 h5 l-2.5,2.9 Z" fill="#521610"/>
<text x="599.40" y="417.65" font-size="8.15" text-anchor="middle" fill="#111" stroke="#111" stroke-width="0.3">16-May-2025</text>
<text x="711.75" y="417.65" font-size="8.15" text-anchor="middle" fill="#111" stroke="#111" stroke-width="0.3">23-May-2025</text>
<rect x="771.30" y="410.45" width="105.50" height="8.80" fill="#a9d6a4" rx="4.4"/>
<text x="819.05" y="417.65" font-size="8.15" text-anchor="middle" fill="#1f4a24" stroke="#1f4a24" stroke-width="0.25">Released</text>
<path d="M866.30,413.65 h5 l-2.5,2.9 Z" fill="#122c15"/>
<text x="940.00" y="417.65" font-size="8.15" text-anchor="middle" fill="#111" stroke="#111" stroke-width="0.3">54</text>
<rect x="1003.50" y="410.45" width="208.00" height="8.80" fill="#d5dde9" rx="4.4"/>
<text x="1101.80" y="417.65" font-size="8.15" text-anchor="middle" fill="#3c4654" stroke="#3c4654" stroke-width="0.25">Admin</text>
<path d="M1201.00,413.65 h5 l-2.5,2.9 Z" fill="#242a32"/>
<text x="41.90" y="434.02" font-size="8.15" text-anchor="middle" fill="#111" stroke="#111" stroke-width="0.3">BK008</text>
<rect x="85.60" y="426.83" width="89.40" height="8.80" fill="#e8eaed" rx="4.4"/>
<text x="125.30" y="434.02" font-size="8.15" text-anchor="middle" fill="#1f1f1f" stroke="#1f1f1f" stroke-width="0.25">Resource 6</text>
<path d="M164.50,430.03 h5 l-2.5,2.9 Z" fill="#1f1f1f"/>
<rect x="189.50" y="426.83" width="107.80" height="8.80" fill="#dfcdbd" rx="4.4"/>
<text x="238.40" y="434.02" font-size="8.15" text-anchor="middle" fill="#5b5148" stroke="#5b5148" stroke-width="0.25">Marketing</text>
<path d="M286.80,430.03 h5 l-2.5,2.9 Z" fill="#36302b"/>
<rect x="311.80" y="426.83" width="105.20" height="8.80" fill="#a9c9f8" rx="4.4"/>
<text x="359.40" y="434.02" font-size="8.15" text-anchor="middle" fill="#264a8a" stroke="#264a8a" stroke-width="0.25">Project A</text>
<path d="M406.50,430.03 h5 l-2.5,2.9 Z" fill="#162c52"/>
<rect x="431.50" y="426.83" width="100.60" height="8.80" fill="#fbd3cb" rx="4.4"/>
<text x="476.80" y="434.02" font-size="8.15" text-anchor="middle" fill="#8f4a3c" stroke="#8f4a3c" stroke-width="0.25">Branch B</text>
<path d="M521.60,430.03 h5 l-2.5,2.9 Z" fill="#552c24"/>
<text x="599.40" y="434.02" font-size="8.15" text-anchor="middle" fill="#111" stroke="#111" stroke-width="0.3">05-May-2025</text>
<text x="711.75" y="434.02" font-size="8.15" text-anchor="middle" fill="#111" stroke="#111" stroke-width="0.3">11-May-2025</text>
<rect x="771.30" y="426.83" width="105.50" height="8.80" fill="#dde8fb" rx="4.4"/>
<text x="819.05" y="434.02" font-size="8.15" text-anchor="middle" fill="#2c3444" stroke="#2c3444" stroke-width="0.25">In Use</text>
<path d="M866.30,430.03 h5 l-2.5,2.9 Z" fill="#1a1f28"/>
<text x="940.00" y="434.02" font-size="8.15" text-anchor="middle" fill="#111" stroke="#111" stroke-width="0.3">58</text>
<rect x="1003.50" y="426.83" width="208.00" height="8.80" fill="#ece6dd" rx="4.4"/>
<text x="1101.80" y="434.02" font-size="8.15" text-anchor="middle" fill="#5a5a5a" stroke="#5a5a5a" stroke-width="0.25">Manager</text>
<path d="M1201.00,430.03 h5 l-2.5,2.9 Z" fill="#363636"/>
<text x="41.90" y="450.40" font-size="8.15" text-anchor="middle" fill="#111" stroke="#111" stroke-width="0.3">BK009</text>
<rect x="85.60" y="443.20" width="89.40" height="8.80" fill="#e8eaed" rx="4.4"/>
<text x="125.30" y="450.40" font-size="8.15" text-anchor="middle" fill="#1f1f1f" stroke="#1f1f1f" stroke-width="0.25">Resource 8</text>
<path d="M164.50,446.40 h5 l-2.5,2.9 Z" fill="#1f1f1f"/>
<rect x="189.50" y="443.20" width="107.80" height="8.80" fill="#ece6dd" rx="4.4"/>
<text x="238.40" y="450.40" font-size="8.15" text-anchor="middle" fill="#5a5a5a" stroke="#5a5a5a" stroke-width="0.25">Finance</text>
<path d="M286.80,446.40 h5 l-2.5,2.9 Z" fill="#363636"/>
<rect x="311.80" y="443.20" width="105.20" height="8.80" fill="#c4b6f4" rx="4.4"/>
<text x="359.40" y="450.40" font-size="8.15" text-anchor="middle" fill="#34307e" stroke="#34307e" stroke-width="0.25">Project J</text>
<path d="M406.50,446.40 h5 l-2.5,2.9 Z" fill="#1f1c4b"/>
<rect x="431.50" y="443.20" width="100.60" height="8.80" fill="#ded1f8" rx="4.4"/>
<text x="476.80" y="450.40" font-size="8.15" text-anchor="middle" fill="#3a3f80" stroke="#3a3f80" stroke-width="0.25">Head Office</text>
<path d="M521.60,446.40 h5 l-2.5,2.9 Z" fill="#22254c"/>
<text x="599.40" y="450.40" font-size="8.15" text-anchor="middle" fill="#111" stroke="#111" stroke-width="0.3">22-Nov-2025</text>
<text x="711.75" y="450.40" font-size="8.15" text-anchor="middle" fill="#111" stroke="#111" stroke-width="0.3">23-Nov-2025</text>
<rect x="771.30" y="443.20" width="105.50" height="8.80" fill="#c5ddf8" rx="4.4"/>
<text x="819.05" y="450.40" font-size="8.15" text-anchor="middle" fill="#2c4f8a" stroke="#2c4f8a" stroke-width="0.25">Available</text>
<path d="M866.30,446.40 h5 l-2.5,2.9 Z" fill="#1a2f52"/>
<text x="940.00" y="450.40" font-size="8.15" text-anchor="middle" fill="#111" stroke="#111" stroke-width="0.3">63</text>
<rect x="1003.50" y="443.20" width="208.00" height="8.80" fill="#dfcdbd" rx="4.4"/>
<text x="1101.80" y="450.40" font-size="8.15" text-anchor="middle" fill="#5b5148" stroke="#5b5148" stroke-width="0.25">Coordinator</text>
<path d="M1201.00,446.40 h5 l-2.5,2.9 Z" fill="#36302b"/>
<text x="41.90" y="466.77" font-size="8.15" text-anchor="middle" fill="#111" stroke="#111" stroke-width="0.3">BK010</text>
<rect x="85.60" y="459.58" width="89.40" height="8.80" fill="#e8eaed" rx="4.4"/>
<text x="125.30" y="466.77" font-size="8.15" text-anchor="middle" fill="#1f1f1f" stroke="#1f1f1f" stroke-width="0.25">Resource 19</text>
<path d="M164.50,462.78 h5 l-2.5,2.9 Z" fill="#1f1f1f"/>
<rect x="189.50" y="459.58" width="107.80" height="8.80" fill="#ece6dd" rx="4.4"/>
<text x="238.40" y="466.77" font-size="8.15" text-anchor="middle" fill="#5a5a5a" stroke="#5a5a5a" stroke-width="0.25">Finance</text>
<path d="M286.80,462.78 h5 l-2.5,2.9 Z" fill="#363636"/>
<rect x="311.80" y="459.58" width="105.20" height="8.80" fill="#d0e4fb" rx="4.4"/>
<text x="359.40" y="466.77" font-size="8.15" text-anchor="middle" fill="#2f4a7c" stroke="#2f4a7c" stroke-width="0.25">Project E</text>
<path d="M406.50,462.78 h5 l-2.5,2.9 Z" fill="#1c2c4a"/>
<rect x="431.50" y="459.58" width="100.60" height="8.80" fill="#f8b6b0" rx="4.4"/>
<text x="476.80" y="466.77" font-size="8.15" text-anchor="middle" fill="#8a261c" stroke="#8a261c" stroke-width="0.25">Client Site</text>
<path d="M521.60,462.78 h5 l-2.5,2.9 Z" fill="#521610"/>
<text x="599.40" y="466.77" font-size="8.15" text-anchor="middle" fill="#111" stroke="#111" stroke-width="0.3">25-May-2025</text>
<text x="711.75" y="466.77" font-size="8.15" text-anchor="middle" fill="#111" stroke="#111" stroke-width="0.3">27-May-2025</text>
<rect x="771.30" y="459.58" width="105.50" height="8.80" fill="#a9d6a4" rx="4.4"/>
<text x="819.05" y="466.77" font-size="8.15" text-anchor="middle" fill="#1f4a24" stroke="#1f4a24" stroke-width="0.25">Released</text>
<path d="M866.30,462.78 h5 l-2.5,2.9 Z" fill="#122c15"/>
<text x="940.00" y="466.77" font-size="8.15" text-anchor="middle" fill="#111" stroke="#111" stroke-width="0.3">82</text>
<rect x="1003.50" y="459.58" width="208.00" height="8.80" fill="#ece6dd" rx="4.4"/>
<text x="1101.80" y="466.77" font-size="8.15" text-anchor="middle" fill="#5a5a5a" stroke="#5a5a5a" stroke-width="0.25">Manager</text>
<path d="M1201.00,462.78 h5 l-2.5,2.9 Z" fill="#363636"/>
<text x="41.90" y="483.15" font-size="8.15" text-anchor="middle" fill="#111" stroke="#111" stroke-width="0.3">BK011</text>
<rect x="85.60" y="475.95" width="89.40" height="8.80" fill="#e8eaed" rx="4.4"/>
<text x="125.30" y="483.15" font-size="8.15" text-anchor="middle" fill="#1f1f1f" stroke="#1f1f1f" stroke-width="0.25">Resource 2</text>
<path d="M164.50,479.15 h5 l-2.5,2.9 Z" fill="#1f1f1f"/>
<rect x="189.50" y="475.95" width="107.80" height="8.80" fill="#c5a890" rx="4.4"/>
<text x="238.40" y="483.15" font-size="8.15" text-anchor="middle" fill="#4a3a2c" stroke="#4a3a2c" stroke-width="0.25">Sales</text>
<path d="M286.80,479.15 h5 l-2.5,2.9 Z" fill="#2c221a"/>
<rect x="311.80" y="475.95" width="105.20" height="8.80" fill="#b9c7f6" rx="4.4"/>
<text x="359.40" y="483.15" font-size="8.15" text-anchor="middle" fill="#2c3a86" stroke="#2c3a86" stroke-width="0.25">Project H</text>
<path d="M406.50,479.15 h5 l-2.5,2.9 Z" fill="#1a2250"/>
<rect x="431.50" y="475.95" width="100.60" height="8.80" fill="#fbd3cb" rx="4.4"/>
<text x="476.80" y="483.15" font-size="8.15" text-anchor="middle" fill="#8f4a3c" stroke="#8f4a3c" stroke-width="0.25">Branch B</text>
<path d="M521.60,479.15 h5 l-2.5,2.9 Z" fill="#552c24"/>
<text x="599.40" y="483.15" font-size="8.15" text-anchor="middle" fill="#111" stroke="#111" stroke-width="0.3">10-Nov-2025</text>
<text x="711.75" y="483.15" font-size="8.15" text-anchor="middle" fill="#111" stroke="#111" stroke-width="0.3">20-Nov-2025</text>
<rect x="771.30" y="475.95" width="105.50" height="8.80" fill="#dde8fb" rx="4.4"/>
<text x="819.05" y="483.15" font-size="8.15" text-anchor="middle" fill="#2c3444" stroke="#2c3444" stroke-width="0.25">In Use</text>
<path d="M866.30,479.15 h5 l-2.5,2.9 Z" fill="#1a1f28"/>
<text x="940.00" y="483.15" font-size="8.15" text-anchor="middle" fill="#111" stroke="#111" stroke-width="0.3">71</text>
<rect x="1003.50" y="475.95" width="208.00" height="8.80" fill="#a9c1d9" rx="4.4"/>
<text x="1101.80" y="483.15" font-size="8.15" text-anchor="middle" fill="#33475b" stroke="#33475b" stroke-width="0.25">Team Lead</text>
<path d="M1201.00,479.15 h5 l-2.5,2.9 Z" fill="#1e2a36"/>
<text x="41.90" y="499.52" font-size="8.15" text-anchor="middle" fill="#111" stroke="#111" stroke-width="0.3">BK012</text>
<rect x="85.60" y="492.33" width="89.40" height="8.80" fill="#e8eaed" rx="4.4"/>
<text x="125.30" y="499.52" font-size="8.15" text-anchor="middle" fill="#1f1f1f" stroke="#1f1f1f" stroke-width="0.25">Resource 18</text>
<path d="M164.50,495.53 h5 l-2.5,2.9 Z" fill="#1f1f1f"/>
<rect x="189.50" y="492.33" width="107.80" height="8.80" fill="#d5dde9" rx="4.4"/>
<text x="238.40" y="499.52" font-size="8.15" text-anchor="middle" fill="#3c4654" stroke="#3c4654" stroke-width="0.25">HR</text>
<path d="M286.80,495.53 h5 l-2.5,2.9 Z" fill="#242a32"/>
<rect x="311.80" y="492.33" width="105.20" height="8.80" fill="#c9cef9" rx="4.4"/>
<text x="359.40" y="499.52" font-size="8.15" text-anchor="middle" fill="#34387e" stroke="#34387e" stroke-width="0.25">Project I</text>
<path d="M406.50,495.53 h5 l-2.5,2.9 Z" fill="#1f214b"/>
<rect x="431.50" y="492.33" width="100.60" height="8.80" fill="#ded1f8" rx="4.4"/>
<text x="476.80" y="499.52" font-size="8.15" text-anchor="middle" fill="#3a3f80" stroke="#3a3f80" stroke-width="0.25">Head Office</text>
<path d="M521.60,495.53 h5 l-2.5,2.9 Z" fill="#22254c"/>
<text x="599.40" y="499.52" font-size="8.15" text-anchor="middle" fill="#111" stroke="#111" stroke-width="0.3">24-Feb-2025</text>
<text x="711.75" y="499.52" font-size="8.15" text-anchor="middle" fill="#111" stroke="#111" stroke-width="0.3">25-Feb-2025</text>
<rect x="771.30" y="492.33" width="105.50" height="8.80" fill="#c5ddf8" rx="4.4"/>
<text x="819.05" y="499.52" font-size="8.15" text-anchor="middle" fill="#2c4f8a" stroke="#2c4f8a" stroke-width="0.25">Available</text>
<path d="M866.30,495.53 h5 l-2.5,2.9 Z" fill="#1a2f52"/>
<text x="940.00" y="499.52" font-size="8.15" text-anchor="middle" fill="#111" stroke="#111" stroke-width="0.3">48</text>
<rect x="1003.50" y="492.33" width="208.00" height="8.80" fill="#a9c1d9" rx="4.4"/>
<text x="1101.80" y="499.52" font-size="8.15" text-anchor="middle" fill="#33475b" stroke="#33475b" stroke-width="0.25">Team Lead</text>
<path d="M1201.00,495.53 h5 l-2.5,2.9 Z" fill="#1e2a36"/>
<text x="41.90" y="515.90" font-size="8.15" text-anchor="middle" fill="#111" stroke="#111" stroke-width="0.3">BK013</text>
<rect x="85.60" y="508.70" width="89.40" height="8.80" fill="#e8eaed" rx="4.4"/>
<text x="125.30" y="515.90" font-size="8.15" text-anchor="middle" fill="#1f1f1f" stroke="#1f1f1f" stroke-width="0.25">Resource 11</text>
<path d="M164.50,511.90 h5 l-2.5,2.9 Z" fill="#1f1f1f"/>
<rect x="189.50" y="508.70" width="107.80" height="8.80" fill="#ece6dd" rx="4.4"/>
<text x="238.40" y="515.90" font-size="8.15" text-anchor="middle" fill="#5a5a5a" stroke="#5a5a5a" stroke-width="0.25">Finance</text>
<path d="M286.80,511.90 h5 l-2.5,2.9 Z" fill="#363636"/>
<rect x="311.80" y="508.70" width="105.20" height="8.80" fill="#a9a9ef" rx="4.4"/>
<text x="359.40" y="515.90" font-size="8.15" text-anchor="middle" fill="#2a2a7e" stroke="#2a2a7e" stroke-width="0.25">Project B</text>
<path d="M406.50,511.90 h5 l-2.5,2.9 Z" fill="#19194b"/>
<rect x="431.50" y="508.70" width="100.60" height="8.80" fill="#e7d1f6" rx="4.4"/>
<text x="476.80" y="515.90" font-size="8.15" text-anchor="middle" fill="#5c3f7e" stroke="#5c3f7e" stroke-width="0.25">Remote</text>
<path d="M521.60,511.90 h5 l-2.5,2.9 Z" fill="#37254b"/>
<text x="599.40" y="515.90" font-size="8.15" text-anchor="middle" fill="#111" stroke="#111" stroke-width="0.3">04-Oct-2025</text>
<text x="711.75" y="515.90" font-size="8.15" text-anchor="middle" fill="#111" stroke="#111" stroke-width="0.3">09-Oct-2025</text>
<rect x="771.30" y="508.70" width="105.50" height="8.80" fill="#dde8fb" rx="4.4"/>
<text x="819.05" y="515.90" font-size="8.15" text-anchor="middle" fill="#2c3444" stroke="#2c3444" stroke-width="0.25">In Use</text>
<path d="M866.30,511.90 h5 l-2.5,2.9 Z" fill="#1a1f28"/>
<text x="940.00" y="515.90" font-size="8.15" text-anchor="middle" fill="#111" stroke="#111" stroke-width="0.3">31</text>
<rect x="1003.50" y="508.70" width="208.00" height="8.80" fill="#d5dde9" rx="4.4"/>
<text x="1101.80" y="515.90" font-size="8.15" text-anchor="middle" fill="#3c4654" stroke="#3c4654" stroke-width="0.25">Admin</text>
<path d="M1201.00,511.90 h5 l-2.5,2.9 Z" fill="#242a32"/>
<text x="41.90" y="532.27" font-size="8.15" text-anchor="middle" fill="#111" stroke="#111" stroke-width="0.3">BK014</text>
<rect x="85.60" y="525.08" width="89.40" height="8.80" fill="#e8eaed" rx="4.4"/>
<text x="125.30" y="532.27" font-size="8.15" text-anchor="middle" fill="#1f1f1f" stroke="#1f1f1f" stroke-width="0.25">Resource 5</text>
<path d="M164.50,528.27 h5 l-2.5,2.9 Z" fill="#1f1f1f"/>
<rect x="189.50" y="525.08" width="107.80" height="8.80" fill="#c5a890" rx="4.4"/>
<text x="238.40" y="532.27" font-size="8.15" text-anchor="middle" fill="#4a3a2c" stroke="#4a3a2c" stroke-width="0.25">Sales</text>
<path d="M286.80,528.27 h5 l-2.5,2.9 Z" fill="#2c221a"/>
<rect x="311.80" y="525.08" width="105.20" height="8.80" fill="#b9c7f6" rx="4.4"/>
<text x="359.40" y="532.27" font-size="8.15" text-anchor="middle" fill="#2c3a86" stroke="#2c3a86" stroke-width="0.25">Project H</text>
<path d="M406.50,528.27 h5 l-2.5,2.9 Z" fill="#1a2250"/>
<rect x="431.50" y="525.08" width="100.60" height="8.80" fill="#fbd3cb" rx="4.4"/>
<text x="476.80" y="532.27" font-size="8.15" text-anchor="middle" fill="#8f4a3c" stroke="#8f4a3c" stroke-width="0.25">Branch B</text>
<path d="M521.60,528.27 h5 l-2.5,2.9 Z" fill="#552c24"/>
<text x="599.40" y="532.27" font-size="8.15" text-anchor="middle" fill="#111" stroke="#111" stroke-width="0.3">07-Apr-2025</text>
<text x="711.75" y="532.27" font-size="8.15" text-anchor="middle" fill="#111" stroke="#111" stroke-width="0.3">14-Apr-2025</text>
<rect x="771.30" y="525.08" width="105.50" height="8.80" fill="#c5ddf8" rx="4.4"/>
<text x="819.05" y="532.27" font-size="8.15" text-anchor="middle" fill="#2c4f8a" stroke="#2c4f8a" stroke-width="0.25">Available</text>
<path d="M866.30,528.27 h5 l-2.5,2.9 Z" fill="#1a2f52"/>
<text x="940.00" y="532.27" font-size="8.15" text-anchor="middle" fill="#111" stroke="#111" stroke-width="0.3">32</text>
<rect x="1003.50" y="525.08" width="208.00" height="8.80" fill="#d5dde9" rx="4.4"/>
<text x="1101.80" y="532.27" font-size="8.15" text-anchor="middle" fill="#3c4654" stroke="#3c4654" stroke-width="0.25">Admin</text>
<path d="M1201.00,528.27 h5 l-2.5,2.9 Z" fill="#242a32"/>
<text x="41.90" y="548.65" font-size="8.15" text-anchor="middle" fill="#111" stroke="#111" stroke-width="0.3">BK015</text>
<rect x="85.60" y="541.45" width="89.40" height="8.80" fill="#e8eaed" rx="4.4"/>
<text x="125.30" y="548.65" font-size="8.15" text-anchor="middle" fill="#1f1f1f" stroke="#1f1f1f" stroke-width="0.25">Resource 16</text>
<path d="M164.50,544.65 h5 l-2.5,2.9 Z" fill="#1f1f1f"/>
<rect x="189.50" y="541.45" width="107.80" height="8.80" fill="#6e8487" rx="4.4"/>
<text x="238.40" y="548.65" font-size="8.15" text-anchor="middle" fill="#1e2a2c" stroke="#1e2a2c" stroke-width="0.25">IT</text>
<path d="M286.80,544.65 h5 l-2.5,2.9 Z" fill="#12191a"/>
<rect x="311.80" y="541.45" width="105.20" height="8.80" fill="#c4b6f4" rx="4.4"/>
<text x="359.40" y="548.65" font-size="8.15" text-anchor="middle" fill="#34307e" stroke="#34307e" stroke-width="0.25">Project J</text>
<path d="M406.50,544.65 h5 l-2.5,2.9 Z" fill="#1f1c4b"/>
<rect x="431.50" y="541.45" width="100.60" height="8.80" fill="#f28d7d" rx="4.4"/>
<text x="476.80" y="548.65" font-size="8.15" text-anchor="middle" fill="#7a1f12" stroke="#7a1f12" stroke-width="0.25">Branch A</text>
<path d="M521.60,544.65 h5 l-2.5,2.9 Z" fill="#49120a"/>
<text x="599.40" y="548.65" font-size="8.15" text-anchor="middle" fill="#111" stroke="#111" stroke-width="0.3">21-Nov-2025</text>
<text x="711.75" y="548.65" font-size="8.15" text-anchor="middle" fill="#111" stroke="#111" stroke-width="0.3">29-Nov-2025</text>
<rect x="771.30" y="541.45" width="105.50" height="8.80" fill="#dce8cd" rx="4.4"/>
<text x="819.05" y="548.65" font-size="8.15" text-anchor="middle" fill="#33421f" stroke="#33421f" stroke-width="0.25">Maintenance</text>
<path d="M866.30,544.65 h5 l-2.5,2.9 Z" fill="#1e2712"/>
<text x="940.00" y="548.65" font-size="8.15" text-anchor="middle" fill="#111" stroke="#111" stroke-width="0.3">47</text>
<rect x="1003.50" y="541.45" width="208.00" height="8.80" fill="#dfcdbd" rx="4.4"/>
<text x="1101.80" y="548.65" font-size="8.15" text-anchor="middle" fill="#5b5148" stroke="#5b5148" stroke-width="0.25">Coordinator</text>
<path d="M1201.00,544.65 h5 l-2.5,2.9 Z" fill="#36302b"/>
<text x="41.90" y="565.02" font-size="8.15" text-anchor="middle" fill="#111" stroke="#111" stroke-width="0.3">BK016</text>
<rect x="85.60" y="557.83" width="89.40" height="8.80" fill="#e8eaed" rx="4.4"/>
<text x="125.30" y="565.02" font-size="8.15" text-anchor="middle" fill="#1f1f1f" stroke="#1f1f1f" stroke-width="0.25">Resource 7</text>
<path d="M164.50,561.02 h5 l-2.5,2.9 Z" fill="#1f1f1f"/>
<rect x="189.50" y="557.83" width="107.80" height="8.80" fill="#c5a890" rx="4.4"/>
<text x="238.40" y="565.02" font-size="8.15" text-anchor="middle" fill="#4a3a2c" stroke="#4a3a2c" stroke-width="0.25">Sales</text>
<path d="M286.80,561.02 h5 l-2.5,2.9 Z" fill="#2c221a"/>
<rect x="311.80" y="557.83" width="105.20" height="8.80" fill="#dac9f9" rx="4.4"/>
<text x="359.40" y="565.02" font-size="8.15" text-anchor="middle" fill="#3a3a8c" stroke="#3a3a8c" stroke-width="0.25">Project G</text>
<path d="M406.50,561.02 h5 l-2.5,2.9 Z" fill="#222254"/>
<rect x="431.50" y="557.83" width="100.60" height="8.80" fill="#e7d1f6" rx="4.4"/>
<text x="476.80" y="565.02" font-size="8.15" text-anchor="middle" fill="#5c3f7e" stroke="#5c3f7e" stroke-width="0.25">Remote</text>
<path d="M521.60,561.02 h5 l-2.5,2.9 Z" fill="#37254b"/>
<text x="599.40" y="565.02" font-size="8.15" text-anchor="middle" fill="#111" stroke="#111" stroke-width="0.3">19-Jul-2025</text>
<text x="711.75" y="565.02" font-size="8.15" text-anchor="middle" fill="#111" stroke="#111" stroke-width="0.3">22-Jul-2025</text>
<rect x="771.30" y="557.83" width="105.50" height="8.80" fill="#d6ebe8" rx="4.4"/>
<text x="819.05" y="565.02" font-size="8.15" text-anchor="middle" fill="#24403c" stroke="#24403c" stroke-width="0.25">Booked</text>
<path d="M866.30,561.02 h5 l-2.5,2.9 Z" fill="#152624"/>
<text x="940.00" y="565.02" font-size="8.15" text-anchor="middle" fill="#111" stroke="#111" stroke-width="0.3">73</text>
<rect x="1003.50" y="557.83" width="208.00" height="8.80" fill="#ece6dd" rx="4.4"/>
<text x="1101.80" y="565.02" font-size="8.15" text-anchor="middle" fill="#5a5a5a" stroke="#5a5a5a" stroke-width="0.25">Manager</text>
<path d="M1201.00,561.02 h5 l-2.5,2.9 Z" fill="#363636"/>
<text x="41.90" y="581.40" font-size="8.15" text-anchor="middle" fill="#111" stroke="#111" stroke-width="0.3">BK017</text>
<rect x="85.60" y="574.20" width="89.40" height="8.80" fill="#e8eaed" rx="4.4"/>
<text x="125.30" y="581.40" font-size="8.15" text-anchor="middle" fill="#1f1f1f" stroke="#1f1f1f" stroke-width="0.25">Resource 3</text>
<path d="M164.50,577.40 h5 l-2.5,2.9 Z" fill="#1f1f1f"/>
<rect x="189.50" y="574.20" width="107.80" height="8.80" fill="#d5dde9" rx="4.4"/>
<text x="238.40" y="581.40" font-size="8.15" text-anchor="middle" fill="#3c4654" stroke="#3c4654" stroke-width="0.25">HR</text>
<path d="M286.80,577.40 h5 l-2.5,2.9 Z" fill="#242a32"/>
<rect x="311.80" y="574.20" width="105.20" height="8.80" fill="#dfe5fc" rx="4.4"/>
<text x="359.40" y="581.40" font-size="8.15" text-anchor="middle" fill="#34407e" stroke="#34407e" stroke-width="0.25">Project F</text>
<path d="M406.50,577.40 h5 l-2.5,2.9 Z" fill="#1f264b"/>
<rect x="431.50" y="574.20" width="100.60" height="8.80" fill="#f8b6b0" rx="4.4"/>
<text x="476.80" y="581.40" font-size="8.15" text-anchor="middle" fill="#8a261c" stroke="#8a261c" stroke-width="0.25">Client Site</text>
<path d="M521.60,577.40 h5 l-2.5,2.9 Z" fill="#521610"/>
<text x="599.40" y="581.40" font-size="8.15" text-anchor="middle" fill="#111" stroke="#111" stroke-width="0.3">13-Jul-2025</text>
<text x="711.75" y="581.40" font-size="8.15" text-anchor="middle" fill="#111" stroke="#111" stroke-width="0.3">15-Jul-2025</text>
<rect x="771.30" y="574.20" width="105.50" height="8.80" fill="#a9d6a4" rx="4.4"/>
<text x="819.05" y="581.40" font-size="8.15" text-anchor="middle" fill="#1f4a24" stroke="#1f4a24" stroke-width="0.25">Released</text>
<path d="M866.30,577.40 h5 l-2.5,2.9 Z" fill="#122c15"/>
<text x="940.00" y="581.40" font-size="8.15" text-anchor="middle" fill="#111" stroke="#111" stroke-width="0.3">95</text>
<rect x="1003.50" y="574.20" width="208.00" height="8.80" fill="#d5dde9" rx="4.4"/>
<text x="1101.80" y="581.40" font-size="8.15" text-anchor="middle" fill="#3c4654" stroke="#3c4654" stroke-width="0.25">Admin</text>
<path d="M1201.00,577.40 h5 l-2.5,2.9 Z" fill="#242a32"/>
<rect x="5.00" y="306.00" width="1210.00" height="1.00" fill="#4aaba2"/>
<rect x="5.00" y="323.00" width="1210.00" height="1.00" fill="#4aaba2"/>
<rect x="5.00" y="339.00" width="1210.00" height="1.00" fill="#4aaba2"/>
<rect x="5.00" y="356.00" width="1210.00" height="1.00" fill="#4aaba2"/>
<rect x="5.00" y="372.00" width="1210.00" height="1.00" fill="#4aaba2"/>
<rect x="5.00" y="388.00" width="1210.00" height="1.00" fill="#4aaba2"/>
<rect x="5.00" y="405.00" width="1210.00" height="1.00" fill="#4aaba2"/>
<rect x="5.00" y="421.00" width="1210.00" height="1.00" fill="#4aaba2"/>
<rect x="5.00" y="438.00" width="1210.00" height="1.00" fill="#4aaba2"/>
<rect x="5.00" y="454.00" width="1210.00" height="1.00" fill="#4aaba2"/>
<rect x="5.00" y="470.00" width="1210.00" height="1.00" fill="#4aaba2"/>
<rect x="5.00" y="487.00" width="1210.00" height="1.00" fill="#4aaba2"/>
<rect x="5.00" y="503.00" width="1210.00" height="1.00" fill="#4aaba2"/>
<rect x="5.00" y="519.00" width="1210.00" height="1.00" fill="#4aaba2"/>
<rect x="5.00" y="536.00" width="1210.00" height="1.00" fill="#4aaba2"/>
<rect x="5.00" y="552.00" width="1210.00" height="1.00" fill="#4aaba2"/>
<rect x="5.00" y="568.00" width="1210.00" height="1.00" fill="#4aaba2"/>
<rect x="5.00" y="289.10" width="1.00" height="300.00" fill="#4aaba2"/>
<rect x="78.00" y="289.10" width="1.00" height="300.00" fill="#4aaba2"/>
<rect x="182.00" y="289.10" width="1.00" height="300.00" fill="#4aaba2"/>
<rect x="304.00" y="289.10" width="1.00" height="300.00" fill="#4aaba2"/>
<rect x="424.00" y="289.10" width="1.00" height="300.00" fill="#4aaba2"/>
<rect x="539.00" y="289.10" width="1.00" height="300.00" fill="#4aaba2"/>
<rect x="659.00" y="289.10" width="1.00" height="300.00" fill="#4aaba2"/>
<rect x="764.00" y="289.10" width="1.00" height="300.00" fill="#4aaba2"/>
<rect x="884.00" y="289.10" width="1.00" height="300.00" fill="#4aaba2"/>
<rect x="996.00" y="289.10" width="1.00" height="300.00" fill="#4aaba2"/>
<rect x="0.00" y="80.00" width="1.10" height="510.00" fill="#e2e6ea"/>
<rect x="-3.00" y="582.70" width="1144.30" height="5.00" fill="#dddfe2" rx="2"/>
</svg>
</body></html>
